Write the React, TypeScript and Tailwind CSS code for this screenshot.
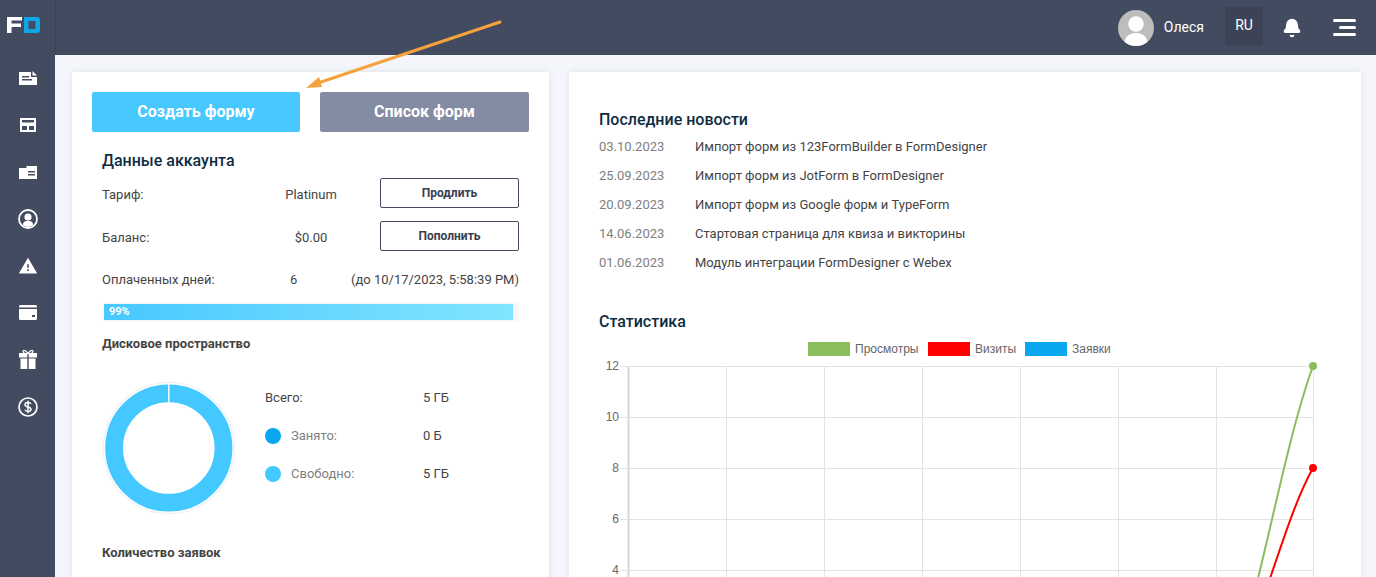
import { Bell } from "lucide-react"
import { MdWarning } from "react-icons/md"

const news = [
  ["03.10.2023", "Импорт форм из 123FormBuilder в FormDesigner"],
  ["25.09.2023", "Импорт форм из JotForm в FormDesigner"],
  ["20.09.2023", "Импорт форм из Google форм и TypeForm"],
  ["14.06.2023", "Стартовая страница для квиза и викторины"],
  ["01.06.2023", "Модуль интеграции FormDesigner с Webex"],
]

function Logo() {
  return (
    <svg width="33" height="16" viewBox="0 0 33 16" className="self-start ml-[7px]">
      <path d="M0 0h15v3.500H4.500V6.500H14V10H4.500v6H0z" fill="#fff" />
      <path fillRule="evenodd" d="M17 0h13a3 3 0 0 1 3 3v10a3 3 0 0 1-3 3H17zM21.500 4v8H28.500V4z" fill="#0ea5e9" />
    </svg>
  )
}

function NavIcons() {
  const cls = "h-[47px] flex items-center justify-center text-white"
  return (
    <div className="mt-[21px] flex flex-col items-center w-full">
      <div className={cls}>
        <svg width="18" height="14" viewBox="0 0 18 14" fill="currentColor">
          <path fillRule="evenodd" d="M0 1h12v5h6v8H0zM3 5v1.400h7V5zM3 8v1.400h10V8z" />
          <path d="M13.500 0L18 4.500h-4.500z" />
        </svg>
      </div>
      <div className={cls}>
        <svg width="16" height="14" viewBox="0 0 16 14" fill="none" stroke="currentColor" strokeWidth="2">
          <rect x="1" y="1" width="14" height="12" />
          <path d="M1 5.500h14M1 7h14M8 6v7" />
        </svg>
      </div>
      <div className={cls}>
        <svg width="18" height="14" viewBox="0 0 18 14" fill="currentColor">
          <path fillRule="evenodd" d="M0 3h7.500V1H18v13H0zM9 6v1.400h7V6zM9 9v1.400h7V9z" />
        </svg>
      </div>
      <div className={cls}>
        <svg width="20" height="20" viewBox="0 0 20 20">
          <circle cx="10" cy="10" r="9" fill="none" stroke="currentColor" strokeWidth="1.800" />
          <circle cx="10" cy="8" r="3.600" fill="currentColor" />
          <path d="M4.500 15.500c1-2.800 3-3.800 5.500-3.800s4.500 1 5.500 3.800c-1.500 1.500-3.500 2.500-5.500 2.500s-4-1-5.500-2.500z" fill="currentColor" />
        </svg>
      </div>
      <div className={cls}>
        <MdWarning size={20} />
      </div>
      <div className={cls}>
        <svg width="18" height="15" viewBox="0 0 18 15" fill="currentColor">
          <path d="M1.500 0h15A1.500 1.500 0 0 1 18 1.500V2.500H0V1.500A1.500 1.500 0 0 1 1.500 0z" />
          <path fillRule="evenodd" d="M0 4h18v9.500a1.500 1.500 0 0 1-1.500 1.500h-15A1.500 1.500 0 0 1 0 13.500zM13 10v2h3v-2z" />
        </svg>
      </div>
      <div className={cls}>
        <svg width="18" height="19" viewBox="0 0 18 19" fill="currentColor">
          <path d="M0 3h8.300v4.500H0zM9.700 3H18v4.500H9.700zM1.500 8.500h6.800V19H1.500zM9.700 8.500h6.800V19H9.700z" />
          <path d="M9 3.500C7 .5 5.500 0 4.500.5 3.500 1.200 4.300 3 6 3.500zM9 3.500c2-3 3.500-3.500 4.500-3 1 .7.200 2.500-1.500 3z" fill="none" stroke="currentColor" strokeWidth="1.200" />
        </svg>
      </div>
      <div className={cls}>
        <svg width="20" height="20" viewBox="0 0 20 20" fill="none" stroke="currentColor">
          <circle cx="10" cy="10" r="9" strokeWidth="1.700" />
          <path d="M13 7c-.5-1-1.500-1.500-3-1.500-1.800 0-3 1-3 2.200 0 3 6 1.500 6 4.500 0 1.300-1.200 2.300-3 2.300-1.600 0-2.600-.6-3.100-1.700M10 3.800v12.400" strokeWidth="1.500" />
        </svg>
      </div>
    </div>
  )
}

function Chart() {
  const xs = [628, 726, 824, 922, 1020, 1118, 1216, 1313]
  const ys = [
    [366, "12"],
    [417, "10"],
    [468, "8"],
    [519, "6"],
    [570, "4"],
  ] as const
  return (
    <svg width="733" height="219" viewBox="599 358 733 219" className="block font-['Liberation_Sans',sans-serif]">
      {xs.map((x, i) => (
        <line key={x} x1={x + 0.5} x2={x + 0.5} y1="366" y2="577" stroke={i === 0 ? "#d6d6d6" : "#e2e2e2"} strokeWidth={i === 0 ? 2 : 1} />
      ))}
      {ys.map(([y, label]) => (
        <g key={label}>
          <line x1="620" x2="1314" y1={y + 0.5} y2={y + 0.5} stroke="#e2e2e2" />
          <text x="619" y={y + 4} textAnchor="end" fontSize="12" fill="#666">
            {label}
          </text>
        </g>
      ))}
      <path d="M1255 590C1272 525 1290 430 1313 366" fill="none" stroke="#8abd5b" strokeWidth="2" />
      <path d="M1266 590C1280 550 1295 500 1313 468" fill="none" stroke="#ff0000" strokeWidth="2" />
      <circle cx="1313" cy="366" r="4" fill="#8abd5b" />
      <circle cx="1313" cy="468" r="4" fill="#ff0000" />
    </svg>
  )
}

function LegendItem({ color, label, width }: { color: string; label: string; width: string }) {
  return (
    <div className={`flex items-center gap-[5px] ${width}`}>
      <span className={`w-[42px] h-[14px] ${color}`} />
      <span className="text-[12px] text-[#666] font-['Liberation_Sans',sans-serif]">{label}</span>
    </div>
  )
}

export default function App() {
  return (
    <div className="relative flex h-screen overflow-hidden bg-[#f4f6fb] font-['Roboto',sans-serif]">
      <aside className="w-[55px] shrink-0 bg-[#434b60] flex flex-col items-center pt-[17px]">
        <Logo />
        <NavIcons />
      </aside>
      <div className="flex-1 min-w-0 flex flex-col">
        <header className="h-[55px] shrink-0 bg-[#434b60] border-l border-[#3d4458] flex items-center justify-end pr-[20px]">
          <div className="w-[36px] h-[36px] rounded-full bg-[#bdbdbd] overflow-hidden">
            <svg viewBox="0 0 36 36" width="36" height="36" fill="#fff">
              <circle cx="18" cy="14" r="7.700" />
              <path d="M6 36c0-8 4-13 12-13s12 5 12 13z" />
            </svg>
          </div>
          <span className="ml-[10px] text-[14px] text-white">Олеся</span>
          <div className="ml-[21px] mb-[3px] w-[38px] h-[38px] rounded-[3px] bg-[#3c4356] flex items-center justify-center pb-[2px] text-[14px] text-white">
            RU
          </div>
          <Bell size={20} className="ml-[19px] text-white" fill="#fff" />
          <div className="ml-[31px] mb-[1px] w-[23px] flex flex-col items-end gap-[4px]">
            <span className="w-[23px] h-[3px] rounded-full bg-white" />
            <span className="w-[17px] h-[3px] rounded-full bg-white" />
            <span className="w-[23px] h-[3px] rounded-full bg-white" />
          </div>
        </header>
        <main className="flex gap-[20px] pl-[17px] pt-[17px] items-start">
          <section className="w-[477px] h-[600px] shrink-0 bg-white shadow-[0_0_6px_rgba(60,70,100,0.12)] px-[20px] pt-[20px]">
            <div className="flex gap-[20px]">
              <button className="w-[208px] h-[40px] rounded-[2px] bg-[#47c9ff] text-white text-[16px] font-bold">Создать форму</button>
              <button className="w-[209px] h-[40px] rounded-[2px] bg-[#848ca3] text-white text-[16px] font-bold">Список форм</button>
            </div>
            <div className="px-[10px]">
              <h2 className="mt-[19px] text-[16px] leading-[20px] font-medium text-[#0d2c3f]">Данные аккаунта</h2>
              <div className="mt-[7px] h-[30px] flex items-center text-[13px] text-[#444]">
                <span className="w-[158px] mt-[3px]">Тариф:</span>
                <span className="w-[102px] text-center mt-[3px]">Platinum</span>
                <button className="ml-[18px] w-[139px] h-[30px] rounded-[2px] border border-[#434b60] text-[12px] font-bold text-[#3a4050]">Продлить</button>
              </div>
              <div className="mt-[13px] h-[30px] flex items-center text-[13px] text-[#444]">
                <span className="w-[158px] mt-[3px]">Баланс:</span>
                <span className="w-[102px] text-center mt-[3px]">$0.00</span>
                <button className="ml-[18px] w-[139px] h-[30px] rounded-[2px] border border-[#434b60] text-[12px] font-bold text-[#3a4050]">Пополнить</button>
              </div>
              <div className="mt-[21px] h-[16px] flex items-center justify-between text-[13px] text-[#444]">
                <span className="w-[158px]">Оплаченных дней:</span>
                <span className="flex-1 pl-[30px]">6</span>
                <span>(до 10/17/2023, 5:58:39 PM)</span>
              </div>
              <div className="mt-[14px] h-[20px] w-[417px] bg-[#f5f7fa] rounded-[2px] p-[2px]">
                <div className="w-[409px] h-[16px] bg-gradient-to-r from-[#47c8ff] to-[#80e5ff] pl-[5px] text-[11px] leading-[15px] font-bold text-white">99%</div>
              </div>
              <h3 className="mt-[14px] text-[13px] leading-[16px] font-bold text-[#444]">Дисковое пространство</h3>
              <div className="mt-[29px] flex items-center">
                <svg width="134" height="134" viewBox="0 0 134 134" className="shrink-0">
                  <circle cx="66.800" cy="67" r="65.500" fill="#fff" stroke="#f0f2f5" strokeWidth="1.500" />
                  <circle cx="66.800" cy="67" r="54.700" fill="none" stroke="#43c8ff" strokeWidth="17.800" />
                  <rect x="66.100" y="3" width="1.400" height="19" fill="#fff" />
                </svg>
                <div className="ml-[29px] mb-[24px] text-[13px] text-[#444] flex flex-col gap-[22px]">
                  <div className="h-[16px] flex items-center">
                    <span className="w-[158px]">Всего:</span>
                    <span>5 ГБ</span>
                  </div>
                  <div className="h-[16px] flex items-center">
                    <span className="w-[16px] h-[16px] rounded-full bg-[#0aa7ee]" />
                    <span className="w-[142px] pl-[10px] text-[#808080]">Занято:</span>
                    <span>0 Б</span>
                  </div>
                  <div className="h-[16px] flex items-center">
                    <span className="w-[16px] h-[16px] rounded-full bg-[#43c8ff]" />
                    <span className="w-[142px] pl-[10px] text-[#808080]">Свободно:</span>
                    <span>5 ГБ</span>
                  </div>
                </div>
              </div>
              <h3 className="mt-[30px] text-[13px] leading-[16px] font-bold text-[#444]">Количество заявок</h3>
            </div>
          </section>
          <section className="w-[792px] h-[600px] shrink-0 bg-white shadow-[0_0_6px_rgba(60,70,100,0.12)] pl-[30px] pt-[38px]">
            <h2 className="text-[16px] leading-[20px] font-medium text-[#0d2c3f]">Последние новости</h2>
            <ul className="mt-[2px]">
              {news.map(([date, title]) => (
                <li key={date} className="h-[29px] flex items-center text-[13px]">
                  <span className="w-[96px] text-[#808080]">{date}</span>
                  <span className="text-[#444]">{title}</span>
                </li>
              ))}
            </ul>
            <h2 className="mt-[35px] text-[16px] leading-[20px] font-medium text-[#0d2c3f]">Статистика</h2>
            <div className="mt-[10px] ml-[209px] h-[14px] flex items-center">
              <LegendItem color="bg-[#8abd5b]" label="Просмотры" width="w-[120px]" />
              <LegendItem color="bg-[#ff0000]" label="Визиты" width="w-[97px]" />
              <LegendItem color="bg-[#0aa7ee]" label="Заявки" width="w-[90px]" />
            </div>
            <div className="mt-[2px]">
              <Chart />
            </div>
          </section>
        </main>
      </div>
      {/* annotation arrow drawn on top of the screenshot */}
      <svg className="absolute left-[300px] top-[15px]" width="210" height="80" viewBox="300 15 210 80">
        <path d="M500 22L318 83" stroke="#f3a23c" strokeWidth="3" strokeLinecap="round" />
        <path d="M306 88L319 77l3 10z" fill="#f3a23c" />
      </svg>
    </div>
  )
}
